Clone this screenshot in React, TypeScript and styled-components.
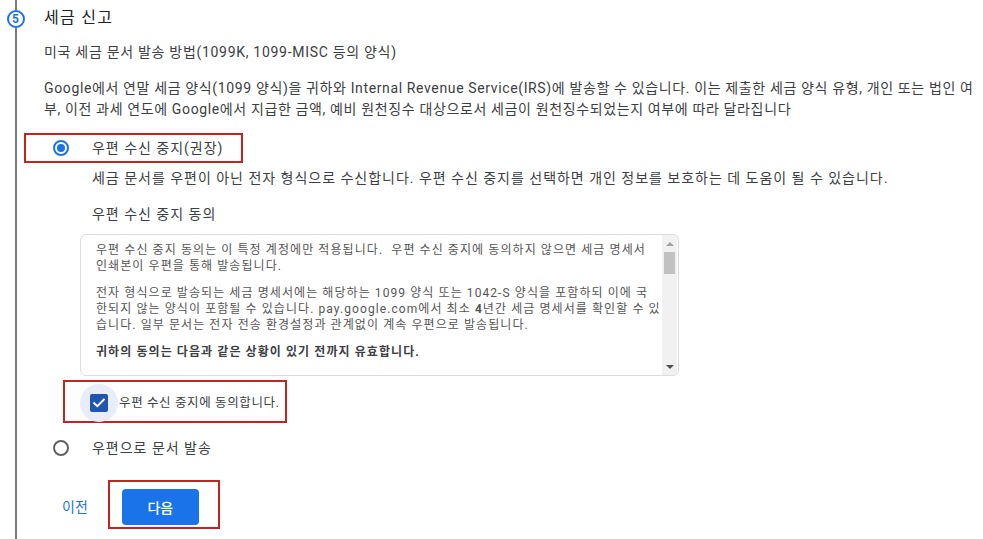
import styled, { createGlobalStyle } from "styled-components";

const GlobalStyle = createGlobalStyle`
  html, body {
    margin: 0;
    padding: 0;
    background: #ffffff;
  }
  body {
    font-family: Roboto, "Noto Sans CJK KR", "Noto Sans", sans-serif;
    color: #3c4043;
  }
`;

const App = () => {
  return (
    <>
      <GlobalStyle />
      <Page>
        <Rail>
          <RailLine $height="10px" />
          <StepBadge>5</StepBadge>
          <RailLine $grow />
        </Rail>

        <Content>
          <Title>세금 신고</Title>
          <Subtitle>미국 세금 문서 발송 방법(1099K, 1099-MISC 등의 양식)</Subtitle>
          <Para>
            Google에서 연말 세금 양식(1099 양식)을 귀하와 Internal Revenue Service(IRS)에 발송할 수 있습니다. 이는 제출한 세금 양식 유형, 개인 또는 법인 여
            <br />
            부, 이전 과세 연도에 Google에서 지급한 금액, 예비 원천징수 대상으로서 세금이 원천징수되었는지 여부에 따라 달라집니다
          </Para>

          <Options>
            <RadioRow $highlight>
              <Radio $checked />
              <OptionLabel>우편 수신 중지(권장)</OptionLabel>
            </RadioRow>

            <OptionBody>
              <Desc>
                세금 문서를 우편이 아닌 전자 형식으로 수신합니다. 우편 수신 중지를 선택하면 개인 정보를 보호하는 데 도움이 될 수 있습니다.
              </Desc>
              <ConsentTitle>우편 수신 중지 동의</ConsentTitle>
            </OptionBody>

            <ConsentBox>
              <ConsentText>
                <ConsentPara>
                  우편 수신 중지 동의는 이 특정 계정에만 적용됩니다.&nbsp; 우편 수신 중지에 동의하지 않으면 세금 명세서
                  <br />
                  인쇄본이 우편을 통해 발송됩니다.
                </ConsentPara>
                <ConsentPara>
                  전자 형식으로 발송되는 세금 명세서에는 해당하는 1099 양식 또는 1042-S 양식을 포함하되 이에 국
                  <br />
                  한되지 않는 양식이 포함될 수 있습니다. pay.google.com에서 최소 <b>4</b>년간 세금 명세서를 확인할 수 있
                  <br />
                  습니다. 일부 문서는 전자 전송 환경설정과 관계없이 계속 우편으로 발송됩니다.
                </ConsentPara>
                <ConsentPara $bold>귀하의 동의는 다음과 같은 상황이 있기 전까지 유효합니다.</ConsentPara>
              </ConsentText>
              <ScrollBar>
                <ScrollArrow $dir="up" />
                <ScrollThumb />
                <ScrollTrack />
                <ScrollArrow $dir="down" />
              </ScrollBar>
            </ConsentBox>

            <CheckRow>
              <CheckHalo>
                <CheckBox>
                  <svg width="12" height="10" viewBox="0 0 12 10">
                    <path d="M1.2 5.2 L4.4 8.2 L10.8 1.6" fill="none" stroke="#ffffff" strokeWidth="2" strokeLinecap="square" />
                  </svg>
                </CheckBox>
              </CheckHalo>
              <CheckLabel>우편 수신 중지에 동의합니다.</CheckLabel>
            </CheckRow>

            <RadioRow>
              <Radio />
              <OptionLabel>우편으로 문서 발송</OptionLabel>
            </RadioRow>

            <Actions>
              <BackLink>이전</BackLink>
              <ButtonFrame>
                <NextButton>다음</NextButton>
              </ButtonFrame>
            </Actions>
          </Options>
        </Content>
      </Page>
    </>
  );
};

export default App;

const Page = styled.div`
  display: grid;
  grid-template-columns: 31px 1fr;
  min-height: 100vh;
  overflow: hidden;
`;

const Rail = styled.div`
  display: flex;
  flex-direction: column;
  align-items: center;
`;

const RailLine = styled.div<{ $height?: string; $grow?: boolean }>`
  width: 2px;
  background: #7a7a7a;
  height: ${(p) => p.$height || "auto"};
  flex: ${(p) => (p.$grow ? "1" : "none")};
`;

const StepBadge = styled.div`
  box-sizing: border-box;
  width: 18px;
  height: 18px;
  border: 2px solid #1a73e8;
  border-radius: 50%;
  color: #1a73e8;
  font-family: Roboto, sans-serif;
  font-weight: 700;
  font-size: 12px;
  line-height: 14px;
  text-align: center;
`;

const Content = styled.div`
  padding-left: 13px;
  padding-top: 7px;
`;

const Title = styled.div`
  font-size: 16px;
  line-height: 22px;
  letter-spacing: 0.08em;
  color: #202124;
`;

const Subtitle = styled.div`
  margin-top: 13px;
  font-size: 14px;
  line-height: 20px;
  letter-spacing: 0.05em;
  color: #3c4043;
`;

const Para = styled.div`
  margin-top: 16px;
  font-size: 14px;
  line-height: 21px;
  letter-spacing: 0.045em;
  white-space: nowrap;
  color: #3c4043;
`;

const Options = styled.div`
  margin-left: -20px;
  margin-top: 13px;
  display: flex;
  flex-direction: column;
  align-items: flex-start;
`;

const RadioRow = styled.div<{ $highlight?: boolean }>`
  box-sizing: border-box;
  display: flex;
  align-items: center;
  gap: 23px;
  width: 219px;
  height: 30px;
  padding-left: 27px;
  border: 2px solid ${(p) => (p.$highlight ? "#c9211e" : "transparent")};
  margin-top: ${(p) => (p.$highlight ? "0" : "10px")};
`;

const Radio = styled.span<{ $checked?: boolean }>`
  box-sizing: border-box;
  flex: none;
  width: 16px;
  height: 16px;
  border-radius: 50%;
  border: 2px solid ${(p) => (p.$checked ? "#1a73e8" : "#5f6368")};
  display: flex;
  align-items: center;
  justify-content: center;

  &::after {
    content: "";
    width: 8px;
    height: 8px;
    border-radius: 50%;
    background: ${(p) => (p.$checked ? "#1a73e8" : "transparent")};
  }
`;

const OptionLabel = styled.span`
  font-size: 14px;
  line-height: 20px;
  letter-spacing: 0.07em;
  color: #3c4043;
  white-space: nowrap;
`;

const OptionBody = styled.div`
  padding-left: 68px;
`;

const Desc = styled.div`
  margin-top: 5px;
  font-size: 14px;
  line-height: 20px;
  letter-spacing: 0.07em;
  white-space: nowrap;
`;

const ConsentTitle = styled.div`
  margin-top: 16px;
  font-size: 14px;
  line-height: 20px;
  letter-spacing: 0.07em;
`;

const ConsentBox = styled.div`
  box-sizing: border-box;
  margin-top: 10px;
  margin-left: 56px;
  width: 599px;
  height: 142px;
  border: 1px solid #dadce0;
  border-radius: 6px;
  display: flex;
  overflow: hidden;
`;

const ConsentText = styled.div`
  flex: 1;
  padding: 7px 10px 0 15px;
  overflow: hidden;
`;

const ConsentPara = styled.p<{ $bold?: boolean }>`
  margin: 0 0 11px;
  font-size: 12px;
  line-height: 16px;
  letter-spacing: 0.09em;
  color: ${(p) => (p.$bold ? "#3c4043" : "#555555")};
  font-weight: ${(p) => (p.$bold ? 700 : 400)};
  white-space: nowrap;

  b {
    font-weight: 700;
  }
`;

const ScrollBar = styled.div`
  flex: none;
  width: 15px;
  margin-right: 1px;
  background: #f1f1f1;
  display: flex;
  flex-direction: column;
`;

const ScrollArrow = styled.div<{ $dir: "up" | "down" }>`
  height: 17px;
  display: flex;
  align-items: center;
  justify-content: center;

  &::before {
    content: "";
    border-left: 4px solid transparent;
    border-right: 4px solid transparent;
    ${(p) =>
      p.$dir === "up"
        ? "border-bottom: 4px solid #a3a3a3;"
        : "border-top: 4px solid #505050;"}
  }
`;

const ScrollThumb = styled.div`
  height: 22px;
  margin: 0 2px;
  background: #c1c1c1;
`;

const ScrollTrack = styled.div`
  flex: 1;
`;

const CheckRow = styled.div`
  box-sizing: border-box;
  margin-top: 4px;
  margin-left: 39px;
  width: 224px;
  height: 43px;
  border: 2px solid #c9211e;
  padding: 3px 0 0 15px;
  display: flex;
  align-items: center;
  gap: 1px;
`;

const CheckHalo = styled.div`
  flex: none;
  width: 38px;
  height: 38px;
  border-radius: 50%;
  background: #e8eef9;
  display: flex;
  align-items: center;
  justify-content: center;
`;

const CheckBox = styled.div`
  width: 18px;
  height: 18px;
  border-radius: 2px;
  background: #1f56b4;
  display: flex;
  align-items: center;
  justify-content: center;
`;

const CheckLabel = styled.span`
  font-size: 12.5px;
  line-height: 18px;
  letter-spacing: 0.05em;
  color: #3c4043;
  white-space: nowrap;
`;

const Actions = styled.div`
  margin-top: 17px;
  margin-left: 38px;
  display: flex;
  align-items: center;
  gap: 20px;
`;

const BackLink = styled.span`
  font-size: 14px;
  line-height: 20px;
  color: #1a73e8;
  padding-top: 5px;
`;

const ButtonFrame = styled.div`
  border: 2px solid #c9211e;
  padding: 7px 19px 2px 12px;
`;

const NextButton = styled.button`
  display: block;
  width: 77px;
  height: 36px;
  border: none;
  border-radius: 4px;
  background: #1a73e8;
  color: #ffffff;
  font-family: Roboto, "Noto Sans CJK KR", sans-serif;
  font-size: 14px;
  font-weight: 500;
  cursor: pointer;
`;
